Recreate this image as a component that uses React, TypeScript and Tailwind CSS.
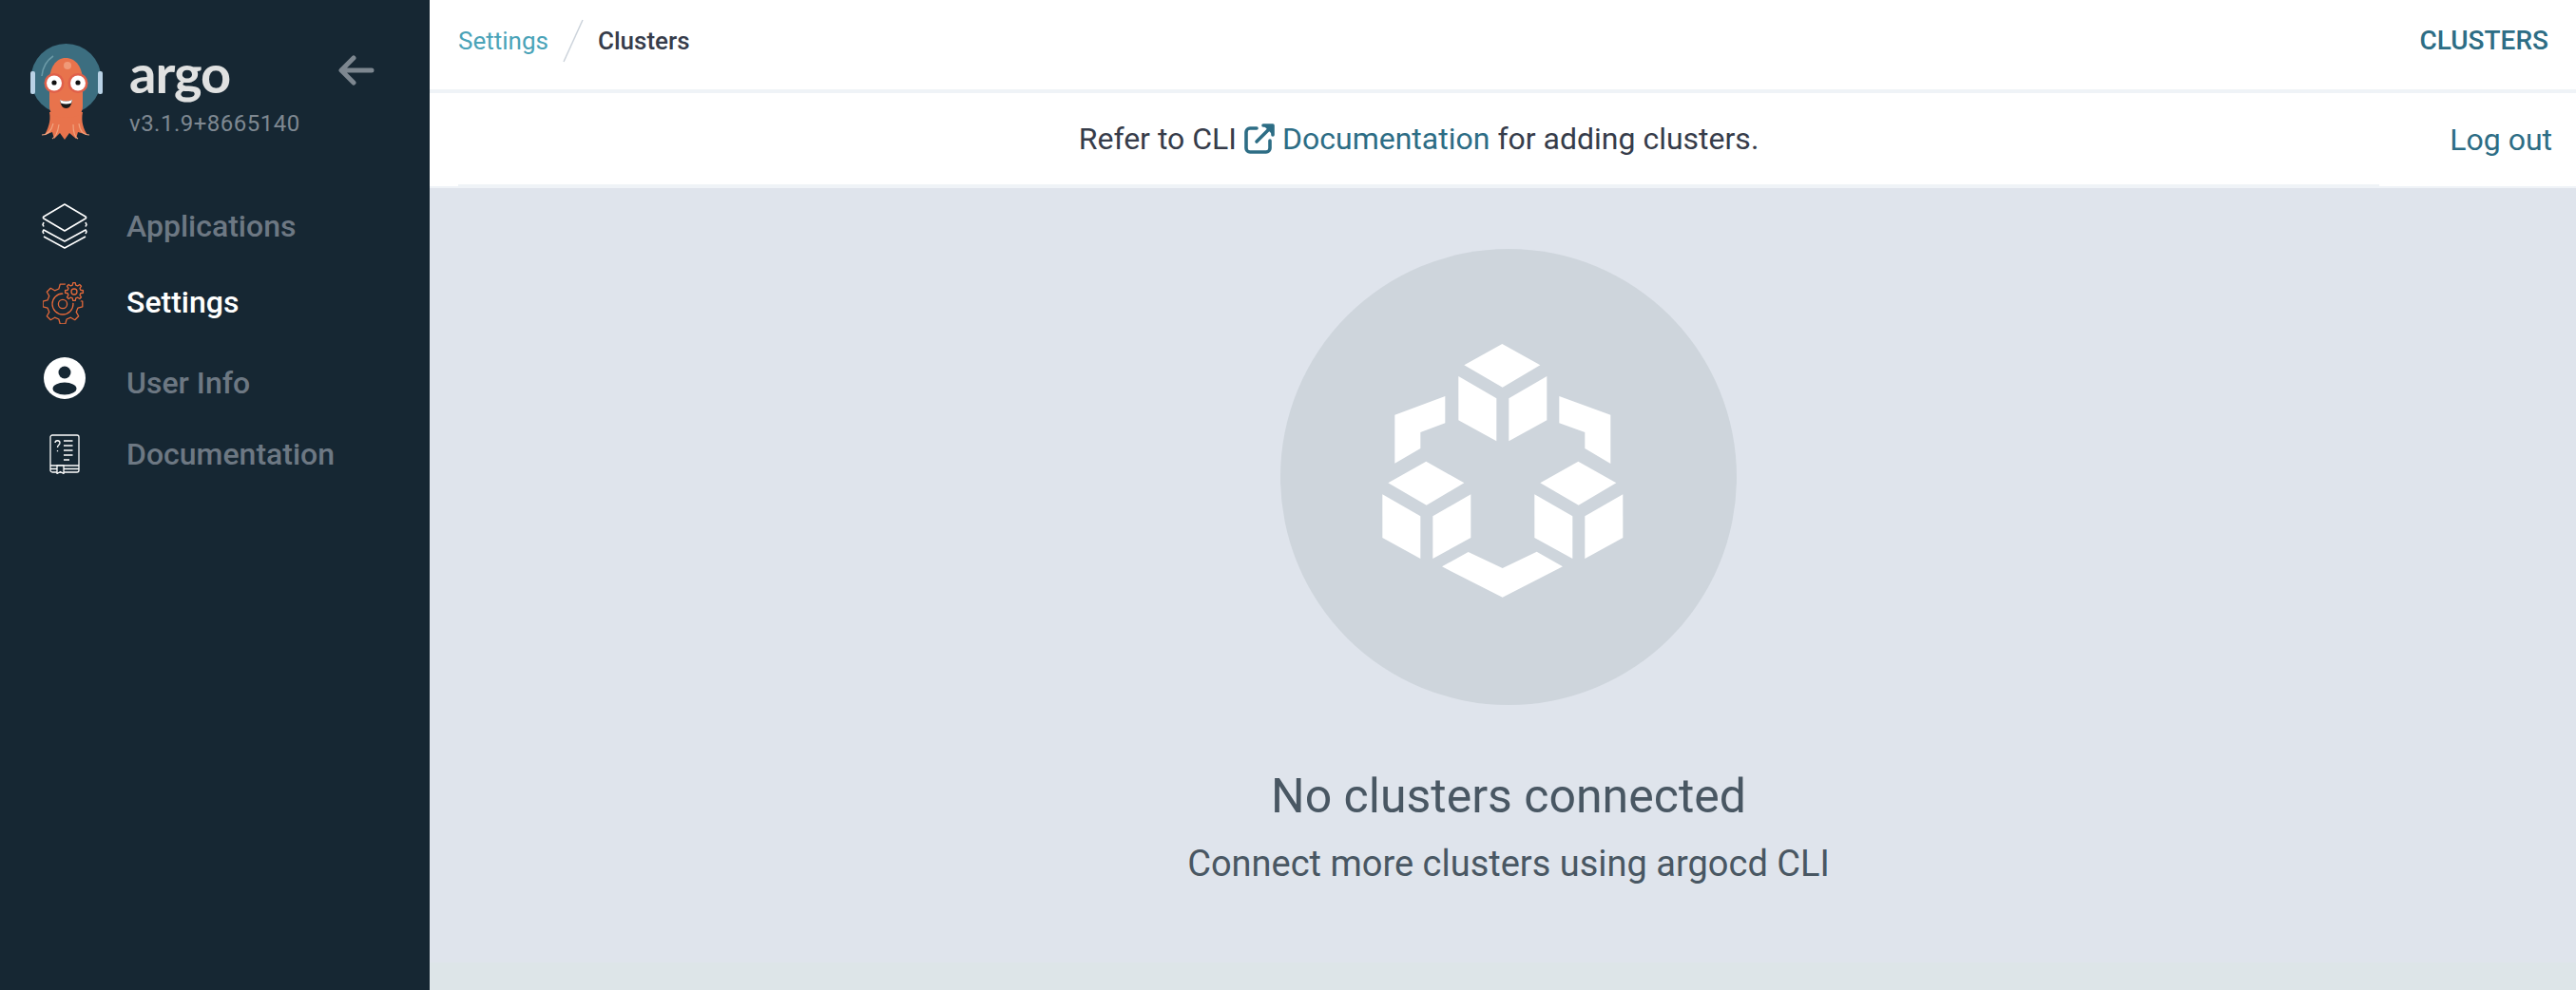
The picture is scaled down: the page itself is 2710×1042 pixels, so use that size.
const font = { fontFamily: "Roboto, 'Liberation Sans', sans-serif" };

function gearPath(cx: number, cy: number, rOut: number, rIn: number, teeth: number) {
  const pts: string[] = [];
  const step = (Math.PI * 2) / teeth;
  for (let i = 0; i < teeth; i++) {
    const a = i * step - Math.PI / 2;
    const list: [number, number][] = [
      [rIn, a - step * 0.32],
      [rOut, a - step * 0.17],
      [rOut, a + step * 0.17],
      [rIn, a + step * 0.32],
    ];
    list.forEach(([r, t]) => pts.push(`${(cx + r * Math.cos(t)).toFixed(2)} ${(cy + r * Math.sin(t)).toFixed(2)}`));
  }
  return "M" + pts.join("L") + "Z";
}

function OctoLogo() {
  return (
    <svg width="80" height="104" viewBox="0 0 80 104">
      <circle cx="39.5" cy="37" r="37" fill="#3c6e80" />
      <rect x="2" y="29" width="5" height="24" rx="2" fill="#b9d2e6" />
      <rect x="73" y="29" width="5" height="24" rx="2" fill="#b9d2e6" />
      <path d="M14 34C15 24 20 17 26 13" stroke="#6b99a6" strokeWidth="1.6" fill="none" />
      <path d="M22 72C24 82 20 90 17 96L25 93L27 100L33 94L38 101L43 94L50 100L52 93L62 96C58 90 55 82 57 72Z" fill="#e8734c" />
      <path d="M14 96C20 96 24 92 26 84M25 100C29 98 31 92 32 85M52 100C48 98 47 92 47 85M64 96C58 96 54 92 53 84" stroke="#f0a37f" strokeWidth="1.2" fill="none" />
      <path d="M22 40C22 25 29 15 39 15C50 15 57 25 57 40V66C57 75 50 78 39.5 78C29 78 22 75 22 66Z" fill="#e8734c" />
      <circle cx="41" cy="23" r="4" fill="#f09a78" />
      <circle cx="27" cy="41.5" r="10.5" fill="#e0604a" />
      <circle cx="52" cy="41.5" r="10.5" fill="#e0604a" />
      <circle cx="27" cy="41.5" r="8" fill="#fff" />
      <circle cx="52" cy="41.5" r="8" fill="#fff" />
      <circle cx="27" cy="41" r="2.6" fill="#111" />
      <circle cx="52" cy="41" r="2.6" fill="#111" />
      <path d="M33 59Q39.5 62 46 59Q45 68 39.5 68Q34 68 33 59Z" fill="#1a1a1a" />
      <path d="M33 59Q39.5 62 46 59L45 62.5Q39.5 64.5 34 62.5Z" fill="#fff" />
    </svg>
  );
}

function StackIcon() {
  return (
    <svg width="48" height="48" viewBox="0 0 48 48" fill="none" stroke="#fff" strokeWidth="1.6" strokeLinejoin="round">
      <path d="M2 35L24 47L46 35M2 28L24 40L46 28" />
      <path d="M24 1L46 14C46.8 14.6 46.8 15.4 46 16L24 29L2 16C1.2 15.4 1.2 14.6 2 14Z" fill="#162733" />
      <path d="M2 20L1 22.5L2 24.5M46 20L47 22.5L46 24.5M2 27.5L1 30L2 32M46 27.5L47 30L46 32" />
    </svg>
  );
}

function GearIcon() {
  return (
    <svg width="46" height="46" viewBox="0 0 46 46" fill="none" stroke="#e2683a" strokeWidth="1.3" strokeLinejoin="round">
      <path d={gearPath(21, 25, 21, 16.5, 8)} />
      <circle cx="21" cy="25" r="11" />
      <circle cx="21" cy="25" r="4.6" />
      <circle cx="33" cy="12" r="12" fill="#162733" stroke="none" />
      <path d={gearPath(33, 12, 9.5, 7, 8)} />
      <circle cx="33" cy="12" r="3" />
    </svg>
  );
}

function UserIcon() {
  return (
    <svg width="44" height="44" viewBox="0 0 44 44">
      <circle cx="22" cy="22" r="22" fill="#fff" />
      <circle cx="22" cy="16" r="6.5" fill="#162733" />
      <ellipse cx="22" cy="33" rx="12.5" ry="6.5" fill="#162733" />
    </svg>
  );
}

function BookIcon() {
  return (
    <svg width="32" height="42" viewBox="0 0 32 42" fill="none" stroke="#fff" strokeWidth="1.3" strokeLinejoin="round">
      <path d="M3 1H29C30 1 31 2 31 3V38C31 39 30 40 29 40H3C2 40 1 39 1 38V3C1 2 2 1 3 1Z" />
      <path d="M1 33H31M1 36.5H31" />
      <path d="M8 33H15V41.5L11.5 39.5L8 41.5Z" fill="#162733" />
      <path d="M15 7H24.5M15 12H24.5M15 17H24.5M15 22H24.5M15 27H21" />
      <path d="M6 9C6 6 11 6 11 9C11 11.5 8.5 11 8.5 14M8.5 17V18.2" />
    </svg>
  );
}

function ClusterIcon() {
  return (
    <svg width="480" height="480" viewBox="80 65 1440 1440" fill="#fff">
      <polygon points="780,365 900,432 781,502 660,432" />
      <polygon points="642,467 762,537 762,672 642,606" />
      <polygon points="921,467 801,537 801,672 921,606" />
      <polygon points="600,530 600,615 522,644 522,695 441,742 441,589" />
      <polygon points="960,530 960,615 1041,644 1041,695 1122,743 1122,589" />
      <polygon points="540,736 660,804 541,874 420,804" />
      <polygon points="402,840 522,909 522,1043 402,977" />
      <polygon points="681,840 561,909 561,1043 681,977" />
      <polygon points="1020,736 1140,804 1021,874 900,804" />
      <polygon points="882,840 1002,909 1002,1043 882,977" />
      <polygon points="1161,840 1041,909 1041,1043 1161,977" />
      <polygon points="673,1022 781,1073 889,1021 971,1068 781,1165 590,1068" />
    </svg>
  );
}

function ExternalIcon() {
  return (
    <svg width="32" height="32" viewBox="0 0 32 32" fill="none" stroke="#2d6d85" strokeWidth="3.6" strokeLinecap="round" strokeLinejoin="round" className="inline-block">
      <path d="M13 5H6C3.8 5 2 6.8 2 9V26C2 28.2 3.8 30 6 30H23C25.2 30 27 28.2 27 26V18" />
      <path d="M13 19L27 5" />
      <path d="M20 2H30V12" fill="#2d6d85" />
    </svg>
  );
}

export default function App() {
  return (
    <div className="flex h-screen overflow-hidden" style={font}>
      {/* Sidebar */}
      <aside className="w-[452px] shrink-0 bg-[#162733]">
        <div className="flex h-[198px] pl-[30px] pt-[46px]">
          <OctoLogo />
          <div className="ml-[26px] w-[220px]">
            <div className="h-[68px] text-[56px] leading-[62px] font-bold tracking-[-1px] text-[#e0e1e1]" style={{ fontFamily: "Lato, sans-serif" }}>argo</div>
            <div className="text-[24px] leading-[32px] tracking-[0.5px] text-[#7e8891]">v3.1.9+8665140</div>
          </div>
          <svg width="38" height="32" viewBox="0 0 38 32" fill="none" stroke="#7d8790" strokeWidth="5" strokeLinecap="round" strokeLinejoin="round" className="mt-[12px]">
            <path d="M35 16H4M16 3L3 16L16 29" />
          </svg>
        </div>
        <nav className="text-[32px] font-medium text-[#6d7883]">
          <div className="flex h-[80px] items-center pl-[38px]">
            <div className="flex w-[60px] justify-center"><StackIcon /></div>
            <span className="ml-[35px]">Applications</span>
          </div>
          <div className="flex h-[80px] items-center pl-[38px] text-white">
            <div className="flex w-[60px] justify-center"><GearIcon /></div>
            <span className="ml-[35px]">Settings</span>
          </div>
          <div className="flex h-[90px] items-center pl-[38px]">
            <div className="mb-[10px] flex w-[60px] justify-center"><UserIcon /></div>
            <span className="ml-[35px]">User Info</span>
          </div>
          <div className="flex h-[60px] items-center pl-[38px]">
            <div className="flex w-[60px] justify-center"><BookIcon /></div>
            <span className="ml-[35px]">Documentation</span>
          </div>
        </nav>
      </aside>

      {/* Content */}
      <div className="flex min-w-0 flex-1 flex-col">
        <header className="flex h-[98px] shrink-0 items-center justify-between border-b-4 border-[#eff3f7] bg-white pl-[30px] pr-[29px] pb-[8px]">
          <div className="flex items-center text-[26px]">
            <span className="text-[#4aa3b8]">Settings</span>
            <svg width="22" height="46" viewBox="0 0 22 46" className="mx-[15px]">
              <path d="M21 1L1 45" stroke="#ccd3db" strokeWidth="1.5" />
            </svg>
            <span className="font-medium text-[#363c4a]">Clusters</span>
          </div>
          <span className="text-[28px] font-medium text-[#2d6d85]">CLUSTERS</span>
        </header>

        <div className="flex h-[100px] shrink-0 border-b-2 border-[#eff3f7] bg-white text-[32px]">
          <div className="ml-[30px] flex h-[98px] flex-1 items-center justify-center border-b-2 border-[#eff3f7] text-[#363c4a]">
            <span>Refer to CLI</span>
            <span className="ml-[8px] mr-[8px] flex"><ExternalIcon /></span>
            <span className="text-[#2d6d85]">Documentation</span>
            <span className="ml-[8px]">for adding clusters.</span>
          </div>
          <div className="flex w-[207px] items-center justify-end pr-[25px] text-[#2d6d85]">Log out</div>
        </div>

        <main className="flex flex-1 flex-col bg-[#dfe4ec]">
          <div className="flex flex-1 flex-col items-center pl-[12px] pt-[64px]">
            <div className="h-[480px] w-[480px] rounded-full bg-[#ced5dc]"><ClusterIcon /></div>
            <h1 className="mt-[62px] text-[50px] leading-[68px] text-[#495763]">No clusters connected</h1>
            <p className="mt-[12px] text-[38px] leading-[50px] text-[#495763]">Connect more clusters using argocd CLI</p>
          </div>
          <div className="h-[29px] shrink-0 bg-[#dde5e8]" />
        </main>
      </div>
    </div>
  );
}
